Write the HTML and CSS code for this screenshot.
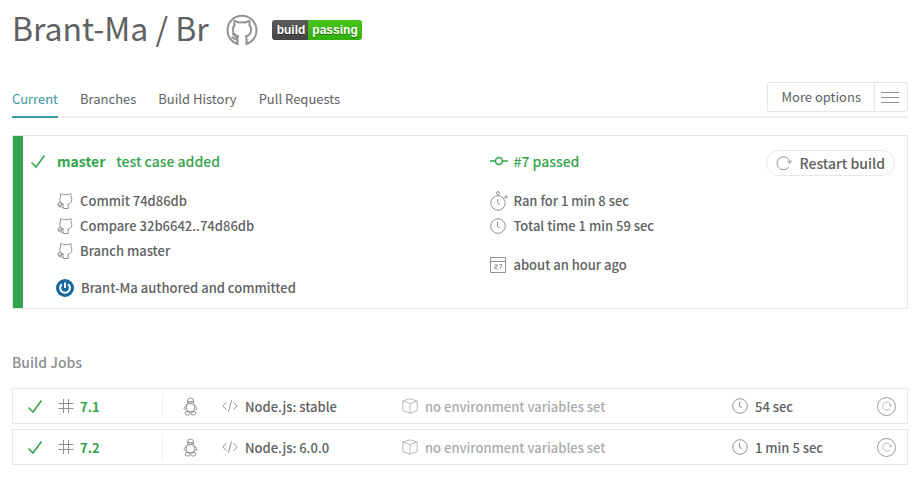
FILE: index.html
```html
<!DOCTYPE html>
<html lang="en">
<head>
<meta charset="utf-8">
<meta name="viewport" content="width=device-width, initial-scale=1">
<title>Brant-Ma / Br</title>
<link rel="stylesheet" href="styles.css">
</head>
<body>
<svg class="sprite" aria-hidden="true">
  <symbol id="check" viewBox="0 0 16 16"><path d="M1.500 9.500 6 14 14.500 2.500"/></symbol>
  <symbol id="cat" viewBox="0 0 16 16"><path d="M6.500 12.300V11C4.200 10.600 2.800 9.200 2.800 6.700c0-1.300.3-2.200.8-2.900-.3-1-.3-2.200 0-3.200 1.200.1 2.100.6 2.900 1.200 1.500-.3 3-.3 4.500 0 .8-.6 1.700-1.100 2.900-1.200.3 1 .3 2.200 0 3.200.6.700.9 1.600.9 2.900 0 2.500-1.400 3.900-3.700 4.300v4.500H6.500v-1.700c-2 .8-4 .2-4.700-1-.5-1-1.300-1-1.300-1"/><circle cx="3" cy="11.300" r="1.900"/><path d="M1.500 12.800c1.200-1 2.500-1.600 4.500-.8"/></symbol>
  <symbol id="github" viewBox="0 0 32 32"><path d="M11.500 30C5.500 28.200 1.500 22.700 1.500 16.200a14.500 14.500 0 0 1 29 0c0 6.500-4 12-10 13.800v-5.500c0-1-.1-1.600-.5-2.200 3.300-.7 5-3 5-6.800 0-1.900-.6-3.300-1.600-4.500.4-1.300.3-2.600-.1-4-1.500.1-2.700.7-4 1.600a15 15 0 0 0-6.600 0c-1.300-.9-2.500-1.500-4-1.600-.4 1.400-.5 2.700-.1 4C7.600 12.200 7 13.600 7 15.500c0 3.800 1.700 6.100 5 6.800-.4.600-.5 1.200-.5 2.200z"/><path d="M6 20c2.200 0 2.500 1.200 3.200 2.200s1.500 1.200 2.500 1.100M5.500 23.200c2.500-.2 2.500 3 6 2.600"/></symbol>
  <symbol id="commit" viewBox="0 0 18 16"><path d="M0 8h5.300M12.700 8H18"/><circle cx="9" cy="8" r="3.500"/></symbol>
  <symbol id="clock" viewBox="0 0 16 16"><circle cx="8" cy="8" r="7.300"/><path d="M7.500 3.800V8.500L10 9.500"/></symbol>
  <symbol id="stopwatch" viewBox="0 0 18 20"><circle cx="8" cy="12" r="7.200"/><circle cx="8" cy="2.200" r="1.600"/><path d="M7.700 8v4.500l2 1M14.200 7l1-1M15 5.300l1-1 1.500 2-1.200 1z"/></symbol>
  <symbol id="calendar" viewBox="0 0 16 16"><path d="M.5.500h15v15H.5zM.5 4.500h15M4.500 7.700h2.700v2H4.800v2h2.700M9 7.700h2.800l-1.800 4"/></symbol>
  <symbol id="restart" viewBox="0 0 16 16"><path d="M12.600 12.300A6.500 6.500 0 1 1 14 7.500M11.200 6.200 14 8.500l1.500-3"/></symbol>
  <symbol id="hash" viewBox="0 0 16 16"><path d="M5.500 1v14M10.500 1v14M.5 5.500h15M.5 10.500h15"/></symbol>
  <symbol id="code" viewBox="0 0 16 14"><path d="M4.500 3.200.8 7l3.700 3.800M11.500 3.200 15.200 7l-3.700 3.800M9.500 1.500l-3 11"/></symbol>
  <symbol id="cube" viewBox="0 0 16 16"><path d="M8 .8 15.200 3v9.500L8 15.200.8 12.500V3zM.8 3 8 5.500 15.200 3M8 5.500v9.700"/></symbol>
  <symbol id="linux" viewBox="0 0 15 19"><path d="M4.500 6.500V4.200a3 3.200 0 0 1 6 0v2.300c1.500 1.500 2.500 3 3.600 5.300-.5.800-1.300.8-2.200.2M4.500 6.500C3 8 2 9.500.9 11.800c.5.800 1.300.8 2.200.2M4.800 4.700h5.400L7.500 6.700z"/><circle cx="7.500" cy="10.700" r="4.200"/><ellipse cx="4.700" cy="16.200" rx="2.500" ry="1.900"/><ellipse cx="10.300" cy="16.200" rx="2.500" ry="1.900"/><path d="M3.500 13.500l2 2M11.500 13.500l-2 2"/></symbol>
  <symbol id="power" viewBox="0 0 18 18"><circle class="disc" cx="9" cy="9" r="9"/><path d="M5.800 5.200A4.900 4.900 0 1 0 12.200 5.200M9 3.500v5.500"/></symbol>
</svg>

<header class="repo">
  <h1>Brant-Ma / Br</h1>
  <a class="repo-link" href="#" aria-label="GitHub repository"><svg class="icon github"><use href="#github"/></svg></a>
  <a class="badge" href="#"><span class="badge-label">build</span><span class="badge-state">passing</span></a>
</header>

<div class="toolbar">
  <nav class="tabs">
    <a class="tab active" href="#">Current</a>
    <a class="tab" href="#">Branches</a>
    <a class="tab" href="#">Build History</a>
    <a class="tab" href="#">Pull Requests</a>
  </nav>
  <button class="options" type="button"><span class="options-label">More options</span><span class="bars"><i></i><i></i><i></i></span></button>
</div>

<main>
  <section class="build">
    <div class="build-commit">
      <h2 class="build-title"><svg class="icon check"><use href="#check"/></svg><strong>master</strong><span>test case added</span></h2>
      <ul class="facts">
        <li><a href="#"><svg class="icon"><use href="#cat"/></svg>Commit 74d86db</a></li>
        <li><a href="#"><svg class="icon"><use href="#cat"/></svg>Compare 32b6642..74d86db</a></li>
        <li><a href="#"><svg class="icon"><use href="#cat"/></svg>Branch master</a></li>
      </ul>
      <p class="author"><svg class="icon avatar"><use href="#power"/></svg>Brant-Ma authored and committed</p>
    </div>
    <div class="build-status">
      <h2 class="status-title"><svg class="icon commit"><use href="#commit"/></svg>#7 passed</h2>
      <ul class="facts">
        <li><svg class="icon stopwatch"><use href="#stopwatch"/></svg>Ran for 1 min 8 sec</li>
        <li><svg class="icon"><use href="#clock"/></svg>Total time 1 min 59 sec</li>
      </ul>
      <p class="finished"><svg class="icon"><use href="#calendar"/></svg>about an hour ago</p>
    </div>
    <button class="restart" type="button"><svg class="icon"><use href="#restart"/></svg>Restart build</button>
  </section>

  <h2 class="jobs-title">Build Jobs</h2>
  <ul class="jobs">
    <li class="job">
      <a class="job-number" href="#"><svg class="icon check"><use href="#check"/></svg><svg class="icon"><use href="#hash"/></svg>7.1</a>
      <span class="job-lang"><svg class="icon linux"><use href="#linux"/></svg><svg class="icon"><use href="#code"/></svg>Node.js: stable</span>
      <span class="job-env"><svg class="icon"><use href="#cube"/></svg>no environment variables set</span>
      <span class="job-time"><svg class="icon"><use href="#clock"/></svg>54 sec</span>
      <button class="job-restart" type="button" aria-label="Restart job 7.1"><svg class="icon"><use href="#restart"/></svg></button>
    </li>
    <li class="job">
      <a class="job-number" href="#"><svg class="icon check"><use href="#check"/></svg><svg class="icon"><use href="#hash"/></svg>7.2</a>
      <span class="job-lang"><svg class="icon linux"><use href="#linux"/></svg><svg class="icon"><use href="#code"/></svg>Node.js: 6.0.0</span>
      <span class="job-env"><svg class="icon"><use href="#cube"/></svg>no environment variables set</span>
      <span class="job-time"><svg class="icon"><use href="#clock"/></svg>1 min 5 sec</span>
      <button class="job-restart" type="button" aria-label="Restart job 7.2"><svg class="icon"><use href="#restart"/></svg></button>
    </li>
  </ul>
</main>
</body>
</html>
```
FILE: styles.css
```css
* { box-sizing: border-box; }

body {
  margin: 0;
  padding: 0 13px 12px 12px;
  background: #fff;
  color: #606163;
  font: 500 13px/25px "Noto Sans CJK SC", "Noto Sans", sans-serif;
}

h1, h2, p, ul { margin: 0; padding: 0; }
ul { list-style: none; }
a { color: inherit; text-decoration: none; }
button { font: inherit; color: inherit; background: #fff; cursor: pointer; }

.sprite { position: absolute; width: 0; height: 0; }

.icon {
  flex: none;
  width: 16px;
  height: 16px;
  fill: none;
  stroke: #909294;
  stroke-width: 1;
}
.check { stroke: #32a34e; stroke-width: 1.5; }

/* Repository heading */
.repo { display: flex; align-items: center; height: 60px; }
h1 { padding-bottom: 6px; font-size: 32px; line-height: 54px; font-weight: 400; }
.repo-link { display: flex; margin-left: 17px; }
.github { width: 32px; height: 32px; stroke-width: 2; }
.badge {
  display: flex;
  margin-left: 14px;
  border-radius: 3px;
  overflow: hidden;
  color: #fff;
  font: bold 12px/20px "Liberation Sans", sans-serif;
  text-shadow: 0 1px 1px rgba(0, 0, 0, .4);
}
.badge-label { padding: 0 3px 0 5px; background: linear-gradient(#5c5c5c, #454545); }
.badge-state { padding: 0 4px; background: linear-gradient(#46c41c, #34b20c); }

/* Tabs */
.toolbar {
  display: flex;
  justify-content: space-between;
  margin-top: 22px;
  height: 36px;
  border-bottom: 2px solid #efefef;
}
.tabs { display: flex; gap: 22px; font-weight: 400; }
.tab { height: 36px; line-height: 34px; }
.tab.active { color: #3b9a9c; border-bottom: 2px solid #3b9a9c; }
.options {
  display: flex;
  align-items: stretch;
  height: 30px;
  padding: 0;
  border: 1px solid #e6e6e6;
  border-radius: 2px;
  font-weight: 400;
  line-height: 28px;
}
.options-label { padding: 0 13px; }
.bars {
  display: flex;
  flex-direction: column;
  justify-content: center;
  gap: 4px;
  width: 33px;
  padding: 0 8px 0 6px;
  border-left: 1px solid #e6e6e6;
}
.bars i { height: 1px; background: #909090; }

/* Current build */
.build {
  display: flex;
  margin-top: 17px;
  border: 1px solid #e4e4e4;
  background: linear-gradient(#32a34e, #32a34e) no-repeat left / 10px 100%;
  padding: 14px 12px 8px 17px;
}
.build-commit { flex: 1 1 0; min-width: 0; }
.build-status { flex: 0 0 276px; }
.build-title, .status-title {
  display: flex;
  align-items: center;
  color: #32a34e;
  font-size: 14px;
  line-height: 22px;
  font-weight: 500;
}
.build-title { gap: 11px; }
.status-title { gap: 5px; }
.commit { width: 18px; stroke: #32a34e; stroke-width: 1.5; }
.facts { margin-top: 16px; }
.facts li, .facts a, .finished, .author { display: flex; align-items: center; gap: 7px; }
.build-commit .facts { padding-left: 27px; }
.author { margin-top: 12px; padding-left: 26px; }
.stopwatch { width: 18px; height: 20px; margin-right: -2px; }
.finished { margin-top: 14px; }
.avatar { width: 18px; height: 18px; stroke: #fff; stroke-width: 2; }
.disc { fill: #16699f; stroke: none; }
.restart {
  display: flex;
  align-items: center;
  gap: 7px;
  height: 26px;
  padding: 0 9px;
  border: 1px solid #e8e8e8;
  border-radius: 13px;
  font-size: 14px;
}

/* Jobs */
.jobs-title { margin-top: 41px; color: #8c8e90; font-size: 14px; line-height: 25px; font-weight: 500; }
.jobs { margin-top: 13px; display: grid; gap: 5px; }
.job {
  display: grid;
  grid-template-columns: 150fr 239fr 330fr 145fr 18px;
  align-items: center;
  height: 36px;
  padding-right: 12px;
  border: 1px solid #e8e8e8;
}
.job > span, .job-number { display: flex; align-items: center; gap: 7px; white-space: nowrap; }
.job-number { padding-left: 14px; border-right: 1px solid #eee; color: #32a34e; font-weight: 700; }
.job-number .icon { margin-right: -1px; }
.job-number .check { margin-right: 8px; }
.job-lang { padding-left: 20px; }
.linux { width: 15px; height: 19px; margin-right: 17px; }
.job-env { color: #a9abad; }
.job-env .icon { stroke: #b8babc; }
.job-restart {
  display: grid;
  place-items: center;
  width: 19px;
  height: 19px;
  padding: 0;
  border: 1px solid #999;
  border-radius: 50%;
}
.job-restart .icon { width: 10px; height: 10px; }
```
